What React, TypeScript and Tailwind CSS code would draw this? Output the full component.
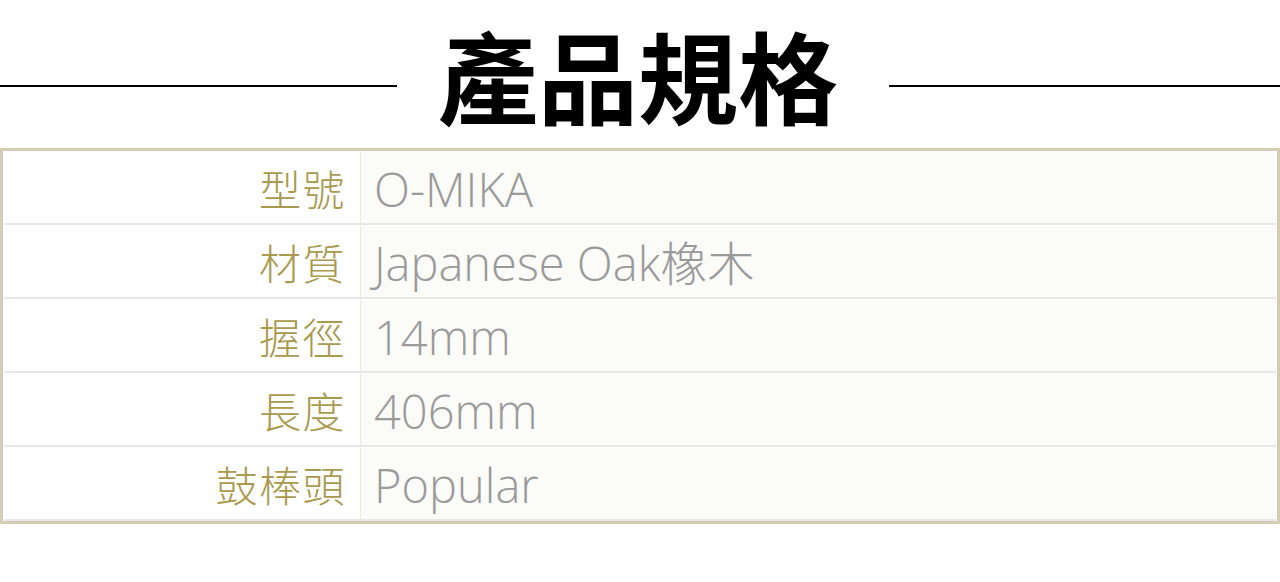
const rows = [
  { label: "型號", value: "O-MIKA" },
  { label: "材質", value: "Japanese Oak橡木" },
  { label: "握徑", value: "14mm" },
  { label: "長度", value: "406mm" },
  { label: "鼓棒頭", value: "Popular" },
]

export default function App() {
  return (
    <div className="w-[1280px] h-[582px] bg-white" style={{ fontFamily: '"Open Sans", "Noto Sans CJK TC", sans-serif' }}>
      <div className="h-[148px] flex items-start">
        <div className="w-[397px] h-[2px] mt-[85px] bg-black" />
        <h1
          className="ml-[41px] mr-[51px] mt-[24px] text-[100px] leading-none font-semibold text-black"
          style={{ fontFamily: '"Noto Sans CJK TC", sans-serif' }}
        >
          產品規格
        </h1>
        <div className="flex-1 h-[2px] mt-[85px] bg-black" />
      </div>
      <div className="border-[3px] border-[#d6ccb5] bg-white px-px pt-px">
        {rows.map((row) => (
          <div key={row.label} className="flex h-[73px] border-b-2 border-[#e8e8e8] mb-px last:mb-0">
            <div
              className="w-[356px] flex items-center justify-end pr-[14px] text-[42px] font-light tracking-[1.5px] text-[#a99a4e]"
              style={{ fontFamily: '"Noto Sans CJK TC", sans-serif' }}
            >
              {row.label}
            </div>
            <div className="flex-1 flex items-center pl-[13px] pt-[3px] border-l border-[#efe8d4] bg-[#fbfbf8] text-[47px] font-light text-[#9a9a9a]">
              {row.value}
            </div>
          </div>
        ))}
      </div>
    </div>
  )
}
